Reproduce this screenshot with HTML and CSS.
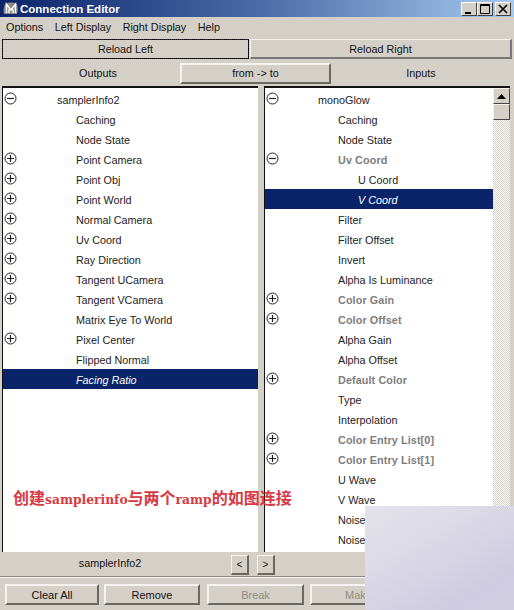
FILE: index.html
```html
<!DOCTYPE html>
<html lang="en">
<head>
<meta charset="utf-8">
<title>Connection Editor</title>
<link rel="stylesheet" href="styles.css">
</head>
<body>
<svg class="defs" width="0" height="0" aria-hidden="true">
  <symbol id="minus" viewBox="0 0 13 13"><circle cx="6.5" cy="6.5" r="5.5" fill="none" stroke="#222" stroke-width="1"/><path d="M3 6.5h7" stroke="#222" stroke-width="1.2"/></symbol>
  <symbol id="plus" viewBox="0 0 13 13"><circle cx="6.5" cy="6.5" r="5.5" fill="none" stroke="#222" stroke-width="1"/><path d="M3 6.5h7M6.5 3v7" stroke="#222" stroke-width="1.2"/></symbol>
</svg>
<div class="window">
  <header class="titlebar">
    <svg class="logo" width="16" height="15" viewBox="0 0 16 15"><path d="M1 13c-1-3 0-8 1-10 3-2 9-2 12 0 1 3 1 7 0 10z" fill="#8a8a88"/><path d="M3.500 12V3l4.500 6 4.500-6v9M6 12V8M10 12V8" fill="none" stroke="#fff" stroke-width="1.400"/></svg>
    <span class="title">Connection Editor</span>
    <div class="winbtns">
      <span class="winbtn"><svg width="14" height="12" viewBox="0 0 14 12"><path d="M3 9h6v2H3z" fill="#000"/></svg></span>
      <span class="winbtn"><svg width="14" height="12" viewBox="0 0 14 12"><path d="M2.500 1.500h9v9h-9z M2 2.500h10" fill="none" stroke="#000"/></svg></span>
      <span class="winbtn winbtn-close"><svg width="14" height="12" viewBox="0 0 14 12"><path d="M3 2l8 8M11 2l-8 8" fill="none" stroke="#000" stroke-width="1.700"/></svg></span>
    </div>
  </header>
  <nav class="menubar">
    <span>Options</span><span>Left Display</span><span>Right Display</span><span>Help</span>
  </nav>
  <div class="reload">
    <button class="btn btn-focus">Reload Left</button>
    <button class="btn btn-right">Reload Right</button>
  </div>
  <div class="heads">
    <span class="head">Outputs</span>
    <button class="btn btn-dir">from -&gt; to</button>
    <span class="head">Inputs</span>
  </div>
  <div class="panes">
    <section class="pane pane-left">
      <div class="row l0"><svg class="ic"><use href="#minus"/></svg>samplerInfo2</div>
      <div class="row l1">Caching</div>
      <div class="row l1">Node State</div>
      <div class="row l1"><svg class="ic"><use href="#plus"/></svg>Point Camera</div>
      <div class="row l1"><svg class="ic"><use href="#plus"/></svg>Point Obj</div>
      <div class="row l1"><svg class="ic"><use href="#plus"/></svg>Point World</div>
      <div class="row l1"><svg class="ic"><use href="#plus"/></svg>Normal Camera</div>
      <div class="row l1"><svg class="ic"><use href="#plus"/></svg>Uv Coord</div>
      <div class="row l1"><svg class="ic"><use href="#plus"/></svg>Ray Direction</div>
      <div class="row l1"><svg class="ic"><use href="#plus"/></svg>Tangent UCamera</div>
      <div class="row l1"><svg class="ic"><use href="#plus"/></svg>Tangent VCamera</div>
      <div class="row l1">Matrix Eye To World</div>
      <div class="row l1"><svg class="ic"><use href="#plus"/></svg>Pixel Center</div>
      <div class="row l1">Flipped Normal</div>
      <div class="row l1 sel">Facing Ratio</div>
    </section>
    <section class="pane pane-right">
      <div class="list">
        <div class="row l0"><svg class="ic"><use href="#minus"/></svg>monoGlow</div>
        <div class="row l1">Caching</div>
        <div class="row l1">Node State</div>
        <div class="row l1 dim"><svg class="ic"><use href="#minus"/></svg>Uv Coord</div>
        <div class="row l2">U Coord</div>
        <div class="row l2 sel">V Coord</div>
        <div class="row l1">Filter</div>
        <div class="row l1">Filter Offset</div>
        <div class="row l1">Invert</div>
        <div class="row l1">Alpha Is Luminance</div>
        <div class="row l1 dim"><svg class="ic"><use href="#plus"/></svg>Color Gain</div>
        <div class="row l1 dim"><svg class="ic"><use href="#plus"/></svg>Color Offset</div>
        <div class="row l1">Alpha Gain</div>
        <div class="row l1">Alpha Offset</div>
        <div class="row l1 dim"><svg class="ic"><use href="#plus"/></svg>Default Color</div>
        <div class="row l1">Type</div>
        <div class="row l1">Interpolation</div>
        <div class="row l1 dim"><svg class="ic"><use href="#plus"/></svg>Color Entry List[0]</div>
        <div class="row l1 dim"><svg class="ic"><use href="#plus"/></svg>Color Entry List[1]</div>
        <div class="row l1">U Wave</div>
        <div class="row l1">V Wave</div>
        <div class="row l1">Noise</div>
        <div class="row l1">Noise</div>
      </div>
      <div class="scrollbar">
        <span class="sb-btn"><svg width="9" height="5" viewBox="0 0 9 5"><path d="M4.500 0L9 5H0z" fill="#000"/></svg></span>
        <span class="sb-btn sb-thumb"></span>
      </div>
    </section>
  </div>
  <div class="status">
    <span class="status-label">samplerInfo2</span>
    <button class="btn btn-nav">&lt;</button>
    <button class="btn btn-nav">&gt;</button>
  </div>
  <footer class="actions">
    <button class="btn btn-act btn-clear">Clear All</button>
    <button class="btn btn-act btn-remove">Remove</button>
    <button class="btn btn-act btn-off btn-break">Break</button>
    <button class="btn btn-act btn-off">Make</button>
  </footer>
  <p class="note">创建<b>samplerinfo</b>与两个<b>ramp</b>的如图连接</p>
  <div class="patch"></div>
</div>
</body>
</html>
```
FILE: styles.css
```css
* { box-sizing: border-box; }
html, body { margin: 0; padding: 0; }
body { width: 514px; height: 610px; overflow: hidden; background: #d4d0c8; font-family: "Liberation Sans", Arial, sans-serif; font-size: 11px; color: #111; }
.defs { position: absolute; }
.window { position: relative; width: 514px; height: 610px; display: flex; flex-direction: column; overflow: hidden; }

.titlebar { height: 17px; display: flex; align-items: center; padding: 0 2px 0 3px; background: linear-gradient(90deg, #0a246a 0%, #4a6aa5 50%, #a6caf0 100%); flex: none; }
.logo { flex: none; margin-right: 1px; }
.title { color: #fff; font: bold 11.500px "Liberation Sans", Arial, sans-serif; flex: 1; }
.winbtns { display: flex; margin-right: 1px; }
.winbtn { width: 16px; height: 14px; background: #d4d0c8; border: 1px solid; border-color: #fff #404040 #404040 #fff; display: flex; align-items: center; justify-content: center; }
.winbtn svg { flex: none; }
.winbtn-close { margin-left: 2px; }

.menubar { height: 20px; display: flex; align-items: center; padding: 0 0 0 6px; gap: 11.500px; font-size: 10.800px; flex: none; }

.btn { font: 10.800px "Liberation Sans", Arial, sans-serif; color: #111; background: #d4d0c8; border: 2px solid; border-color: #f4f3f0 #6a6862 #6a6862 #f4f3f0; padding: 0; }
.reload { display: flex; padding: 2px 2px 0 2px; gap: 1px; flex: none; height: 24px; }
.btn-focus { width: 247px; height: 20px; outline: 1px dotted #000; outline-offset: -1px; border-color: #333 #222 #222 #333; border-width: 1px; }
.btn-right { flex: 1; height: 20px; border-color: #f4f3f0 #777 #777 #f4f3f0; border-width: 1px 2px 2px 1px; }

.heads { height: 24px; display: flex; padding: 0 3px 0 0; align-items: center; flex: none; }
.head { flex: 1; text-align: center; font-size: 10.800px; }
.heads .head:first-child { flex: none; width: 180px; padding-left: 16px; }
.btn-dir { width: 151px; height: 21px; }

.panes { flex: none; height: 466px; display: flex; padding: 0 4px 0 2px; gap: 6px; margin-top: 1px; }
.pane { background: #fff; border: solid #111; border-width: 2px 0 0 1px; height: 466px; overflow: hidden; position: relative; }
.pane-left { width: 256px; padding-top: 1px; }
.pane-right { flex: 1; display: flex; }
.list { flex: 1; min-width: 0; padding-top: 1px; }
.row { position: relative; height: 20px; line-height: 22px; white-space: nowrap; font-size: 10.800px; color: #222; }
.l0 { padding-left: 54px; }
.l1 { padding-left: 73px; }
.l2 { padding-left: 93px; }
.list .l0 { padding-left: 53px; }
.ic { position: absolute; left: 1px; top: 3px; width: 13px; height: 13px; }
.dim { color: #7d7d7d; font-weight: bold; letter-spacing: 0.100px; }
.sel { background: #0a246a; color: #fff; font-style: italic; }

.scrollbar { width: 17px; background: repeating-conic-gradient(#d4d0c8 0 25%, #fff 0 50%) 0 0 / 2px 2px; display: flex; flex-direction: column; flex: none; }
.sb-btn { width: 17px; height: 16px; background: #d4d0c8; border: 1px solid; border-color: #f4f3f0 #444 #444 #f4f3f0; display: flex; align-items: center; justify-content: center; flex: none; }

.status { height: 25px; display: flex; align-items: center; flex: none; border-bottom: 1px solid #8a8882; box-shadow: 0 1px 0 #f4f3f0; }
.status-label { width: 220px; text-align: center; margin-top: -3px; font-size: 10.800px; }
.btn-nav { width: 18px; height: 20px; margin: 1px 8px 0 11px; font-size: 10px; border-width: 1px 2px 2px 1px; }
.btn-nav + .btn-nav { margin-left: 0; }

.actions { display: flex; padding: 7px 0 0 5px; flex: none; }
.btn-act { height: 21px; flex: none; font-size: 11px; }
.btn-clear { width: 94px; margin-right: 5px; }
.btn-remove { width: 96px; margin-right: 7px; }
.btn-break { margin-right: 6px; }
.btn-off { width: 97px; color: #8e8c86; }

.note { position: absolute; left: 13px; top: 487px; margin: 0; font: bold 16px/20px "Noto Sans CJK SC", sans-serif; color: #d63a44; white-space: nowrap; }
.note b { font: bold 12.300px "DejaVu Serif", serif; }
.patch { position: absolute; left: 365px; top: 506px; width: 149px; height: 104px; background: linear-gradient(150deg, #e4e3ea 0%, #dcdae6 35%, #cecbe2 80%, #d2cfe4 100%); }
```
